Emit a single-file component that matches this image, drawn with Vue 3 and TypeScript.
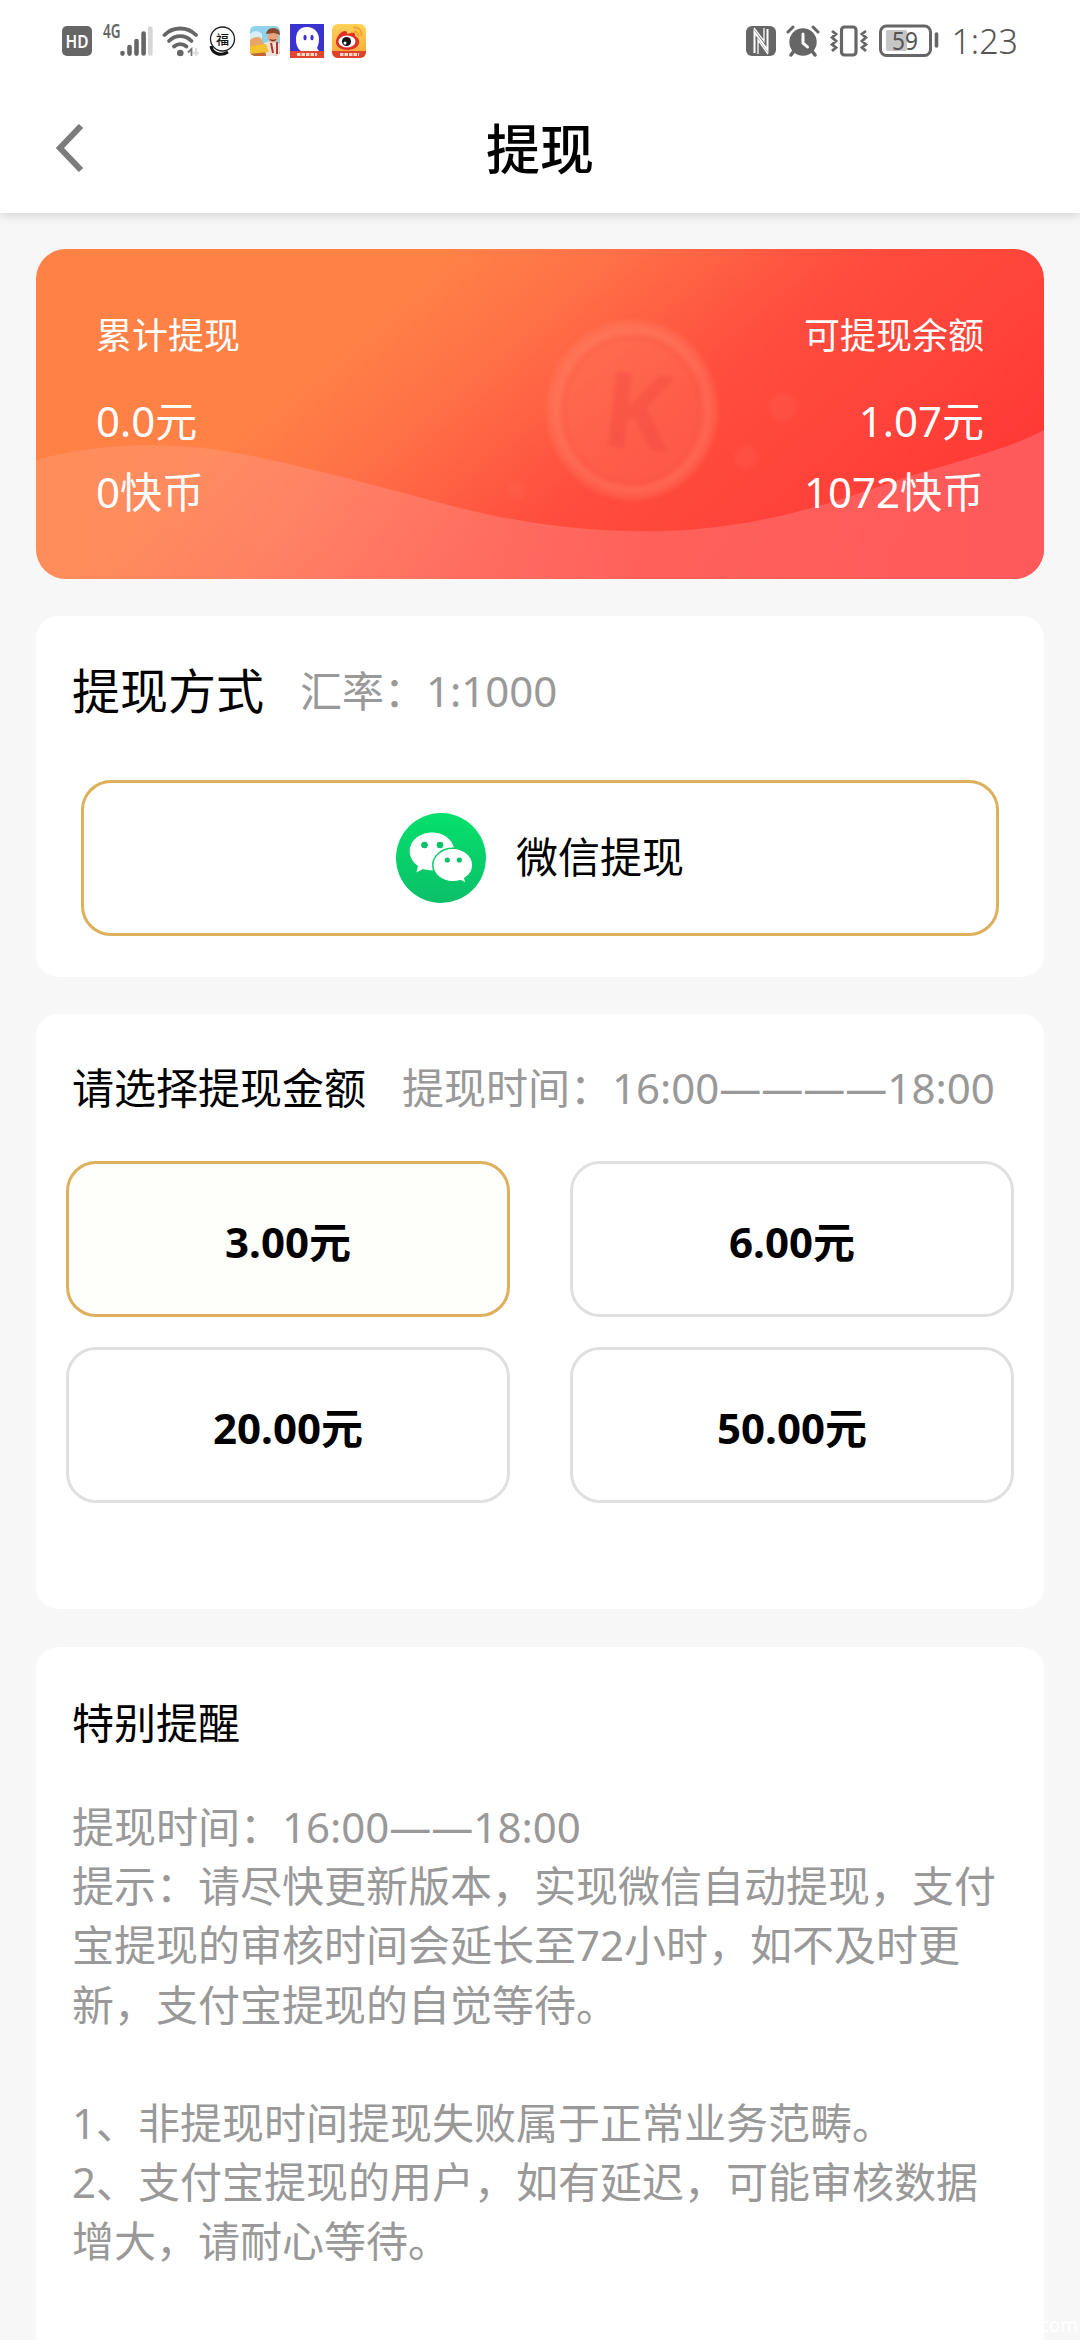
<script setup lang="ts">
import { ref } from 'vue'

interface AmountOption {
  id: number
  label: string
}

const options: AmountOption[] = [
  { id: 1, label: '3.00元' },
  { id: 2, label: '6.00元' },
  { id: 3, label: '20.00元' },
  { id: 4, label: '50.00元' },
]
const selected = ref<number>(1)

const notes: string[] = [
  '提现时间：16:00——18:00',
  '提示：请尽快更新版本，实现微信自动提现，支付宝提现的审核时间会延长至72小时，如不及时更新，支付宝提现的自觉等待。',
  '',
  '1、非提现时间提现失败属于正常业务范畴。',
  '2、支付宝提现的用户，如有延迟，可能审核数据增大，请耐心等待。',
]
</script>

<template>
  <div class="page">
    <div class="status">
      <div class="status-left">
        <svg class="ic-hd" viewBox="0 0 30 30">
          <rect width="30" height="30" rx="5" fill="#666" />
          <text x="15" y="21.5" text-anchor="middle" font-size="17.5" font-weight="600" fill="#fff" textLength="23" lengthAdjust="spacingAndGlyphs">HD</text>
        </svg>
        <svg class="ic-signal" viewBox="0 -10 50 54">
          <text x="0" y="14" font-size="19" font-weight="600" fill="#666" textLength="17.5" lengthAdjust="spacingAndGlyphs">4G</text>
          <g stroke="#666" stroke-width="4.6" stroke-linecap="round">
            <path d="M19.5 29v.6M26.5 23v6.6M33.5 17v12.6M40.6 9.500v20" />
            <path d="M47.300 4.500v25" stroke="#d6d6d6" />
          </g>
        </svg>
        <svg class="ic-wifi" viewBox="0 0 38 34">
          <g fill="none" stroke="#666" stroke-width="3.800" stroke-linecap="round">
            <path d="M2.500 11C11 2.300 25.500 2.300 34 11" />
            <path d="M7 17C13.500 10.500 23 10.500 29.500 17" />
            <path d="M12 22.500C15.500 19.200 21 19.200 24.500 22.500" />
          </g>
          <circle cx="18.300" cy="29" r="3.300" fill="#666" />
          <path d="M26 28.500l3.500-3.500v7" fill="none" stroke="#777" stroke-width="1.800" />
          <path d="M34 24v6m-2.500-2l2.500 3 2.500-3" fill="none" stroke="#ddd" stroke-width="2" />
        </svg>
        <svg class="ic-fu" viewBox="0 0 28 32">
          <path d="M3 21C4 28 12 32 20 27" fill="none" stroke="#111" stroke-width="3" />
          <circle cx="14.500" cy="14" r="12" fill="#fff" stroke="#222" stroke-width="1.300" />
          <text x="14.500" y="18.800" text-anchor="middle" font-size="13" font-weight="500" fill="#111">福</text>
        </svg>
        <svg class="ic-game" viewBox="0 0 30 30">
          <defs><clipPath id="gameClip"><rect width="30" height="30" rx="5" /></clipPath></defs>
          <g clip-path="url(#gameClip)">
            <rect width="30" height="30" fill="#8fd2ec" />
            <path d="M0 8q6-6 12 0v6H0z" fill="#d8eef2" />
            <path d="M0 14q5-5 11-2l4 8H0z" fill="#e9a46a" />
            <path d="M0 26h30v4H0z" fill="#c2642f" />
            <path d="M14 17l9-3 7 4v12H16z" fill="#ece3d8" />
            <path d="M21 17l2 10M27 16v12" stroke="#b5352c" stroke-width="2" />
            <path d="M0 20l16-2 3 8-19 2z" fill="#f3c22e" />
            <circle cx="23" cy="11" r="5.500" fill="#e6a47c" />
            <path d="M16 8q1-6 7-6 7 0 7 7l-6-2z" fill="#8a4a2a" />
            <path d="M20 13.500q3 2 6 0" stroke="#63301d" stroke-width="1.500" fill="none" />
          </g>
        </svg>
        <svg class="ic-ghost" viewBox="0 0 34 34">
          <rect width="34" height="34" fill="#3a33cf" />
          <path d="M6 16C6 7 10 3 17 3s12 5 12 12c0 4-1 7-2 9l2 3H11C8 25 6 21 6 16z" fill="#fff" />
          <ellipse cx="15" cy="13.500" rx="1.600" ry="2.800" fill="#3a33cf" />
          <ellipse cx="22" cy="13.500" rx="1.600" ry="2.800" fill="#3a33cf" />
          <rect y="27" width="34" height="7" fill="#e2452f" />
          <path d="M7 30.500h20" stroke="#ffd9c8" stroke-width="3" stroke-dasharray="3.500 1" />
        </svg>
        <svg class="ic-weibo" viewBox="0 0 34 34">
          <defs>
            <linearGradient id="weiboBg" x1="0" y1="0" x2="0" y2="1">
              <stop offset="0" stop-color="#ffd257" /><stop offset="1" stop-color="#f9a637" />
            </linearGradient>
            <clipPath id="weiboClip"><rect width="34" height="34" rx="6" /></clipPath>
          </defs>
          <g clip-path="url(#weiboClip)">
            <rect width="34" height="34" fill="url(#weiboBg)" />
            <path d="M4 17C5 11 10 7 13 7c3 0 2 3 2 3s5-2 7-1c2 1 1 3 1 3s5 2 4 7c-1 5-7 7-12 7S3 23 4 17z" fill="#dd3027" />
            <ellipse cx="15" cy="17.500" rx="8.500" ry="6" fill="#fff" />
            <circle cx="14.500" cy="17.500" r="4.600" fill="#161616" />
            <circle cx="13" cy="19" r="1.500" fill="#fff" />
            <path d="M22 3.500c5-.5 8 3 7.500 8M22.500 7.500c2.500 0 4 1.500 3.700 4" fill="none" stroke="#f0a52d" stroke-width="2" stroke-linecap="round" />
            <rect y="27" width="34" height="7" fill="#e0402c" />
            <path d="M8 30.500h19" stroke="#ffd9c8" stroke-width="3" stroke-dasharray="3.500 1" />
          </g>
        </svg>
      </div>
      <div class="status-right">
        <svg class="ic-nfc" viewBox="0 0 30 30">
          <rect width="30" height="30" rx="6" fill="#666" />
          <path d="M8.500 27V6l13 18V3" fill="none" stroke="#fff" stroke-width="2" />
          <path d="M12 28V14l10 14M18 2v13L8 2" fill="none" stroke="#fff" stroke-width="1.300" />
        </svg>
        <svg class="ic-alarm" viewBox="0 0 34 32">
          <circle cx="17" cy="17" r="13.700" fill="#666" />
          <path d="M2 7l5-5M32 7l-5-5" stroke="#666" stroke-width="3" stroke-linecap="round" />
          <path d="M8 26l-3 4M26 26l3 4" stroke="#666" stroke-width="3.500" stroke-linecap="round" />
          <path d="M17 9v9l4.500 4" fill="none" stroke="#fff" stroke-width="3" stroke-linecap="round" />
        </svg>
        <svg class="ic-vib" viewBox="0 0 38 32">
          <rect x="11.500" y="2" width="14.500" height="28" rx="3" fill="none" stroke="#666" stroke-width="3.200" />
          <path d="M2 6l4 3-4 3.500 4 3.500-4 3.500 4 3-4 3.500M36 6l-4 3 4 3.500-4 3.500 4 3.500-4 3 4 3.500" fill="none" stroke="#666" stroke-width="2.800" />
        </svg>
        <svg class="ic-bat" viewBox="0 0 60 34">
          <rect x="7" y="6" width="21" height="21" rx="2" fill="#c6c6c6" />
          <rect x="1.500" y="2" width="50" height="29.500" rx="6" fill="none" stroke="#666" stroke-width="3" />
          <path d="M57.500 10v12" stroke="#666" stroke-width="3.600" stroke-linecap="round" />
          <text x="26" y="25.500" text-anchor="middle" font-size="25" fill="#555" textLength="26" lengthAdjust="spacingAndGlyphs">59</text>
        </svg>
        <span class="clock">1:23</span>
      </div>
    </div>

    <header class="nav">
      <svg class="back" viewBox="0 0 28 48">
        <path d="M25 2L4 24l21 22" fill="none" stroke="#7c7c7c" stroke-width="6" />
      </svg>
      <h1>提现</h1>
      <span class="nav-end"></span>
    </header>

    <main class="content">
      <section class="hero">
        <svg class="hero-art" viewBox="0 0 1008 330">
          <defs>
            <linearGradient id="wave" x1="0" y1="0" x2="1" y2="0">
              <stop offset="0" stop-color="#ff9e78" stop-opacity=".4" />
              <stop offset=".25" stop-color="#ff9483" stop-opacity=".5" />
              <stop offset=".6" stop-color="#ff6a64" stop-opacity=".75" />
              <stop offset="1" stop-color="#ff5f62" stop-opacity=".85" />
            </linearGradient>
            <filter id="soft"><feGaussianBlur stdDeviation="2" /></filter>
          </defs>
          <path d="M0 211C60 194 140 190 221 208C300 225 360 242 420 258C500 278 570 284 630 282C700 280 770 264 850 235C910 214 970 202 1008 181V330H0z" fill="url(#wave)" />
          <g filter="url(#soft)">
            <ellipse cx="596" cy="161" rx="79" ry="83" fill="#ff8068" fill-opacity=".28" stroke="#ff8a70" stroke-opacity=".28" stroke-width="13" />
            <ellipse cx="596" cy="161" rx="67" ry="72" fill="none" stroke="#e8443a" stroke-opacity=".2" stroke-width="3" />
            <text x="602" y="200" text-anchor="middle" font-size="106" font-weight="700" fill="#f0483c" fill-opacity=".38" transform="rotate(6 600 160)">K</text>
            <circle cx="747" cy="158" r="14" fill="#ff7060" fill-opacity=".16" />
            <circle cx="710" cy="208" r="12" fill="#ff7060" fill-opacity=".16" />
            <circle cx="480" cy="242" r="9" fill="#ff7060" fill-opacity=".16" />
          </g>
        </svg>
        <div class="hero-col">
          <p class="hero-label">累计提现</p>
          <p class="hero-num">0.0元</p>
          <p class="hero-num">0快币</p>
        </div>
        <div class="hero-col right">
          <p class="hero-label">可提现余额</p>
          <p class="hero-num">1.07元</p>
          <p class="hero-num">1072快币</p>
        </div>
      </section>

      <section class="card method">
        <div class="card-head">
          <h2 class="big">提现方式</h2>
          <span class="hint">汇率：1:1000</span>
        </div>
        <button class="wechat" type="button">
          <svg class="wx" viewBox="0 0 90 90">
            <defs>
              <linearGradient id="wxBg" x1="0" y1="0" x2="0" y2="1">
                <stop offset="0" stop-color="#05e06c" /><stop offset="1" stop-color="#0bc069" />
              </linearGradient>
            </defs>
            <circle cx="45" cy="45" r="45" fill="url(#wxBg)" />
            <path d="M36 19.500c-12.500 0-22.300 8.300-22.300 18.800 0 6 3.200 11.200 8.300 14.700l-1.600 6.500 6.600-3.600c2.800.9 5.700 1.400 9 1.400 12.500 0 22.300-8.500 22.300-19S48.500 19.500 36 19.500z" fill="#fff" />
            <circle cx="28.500" cy="32" r="3.300" fill="#08c267" />
            <circle cx="44" cy="32" r="3.300" fill="#08c267" />
            <path d="M56.800 35.300c-11.200 0-20 7.500-20 16.700s8.800 16.800 20 16.800c2.700 0 5.400-.4 7.800-1.200l5.500 3.200-1.300-5.500c5-3 8-7.800 8-13.300 0-9.200-8.900-16.700-20-16.700z" fill="#fff" stroke="#08cc68" stroke-width="1.500" />
            <circle cx="51.300" cy="47" r="2.600" fill="#08c267" />
            <circle cx="63.300" cy="47" r="2.600" fill="#08c267" />
          </svg>
          <span class="wx-label">微信提现</span>
        </button>
      </section>

      <section class="card amounts">
        <div class="card-head">
          <h2>请选择提现金额</h2>
          <span class="hint">提现时间：16:00————18:00</span>
        </div>
        <div class="grid">
          <button
            v-for="o in options"
            :key="o.id"
            type="button"
            class="option"
            :class="{ active: o.id === selected }"
            @click="selected = o.id"
          >{{ o.label }}</button>
        </div>
      </section>

      <section class="card reminder">
        <h2>特别提醒</h2>
        <div class="notes">
          <p v-for="(n, i) in notes" :key="i">{{ n }}</p>
        </div>
      </section>
    </main>

    <span class="watermark">com</span>
  </div>
</template>

<style>
body {
  margin: 0;
  background: #f7f7f7;
}
</style>

<style scoped>
.page {
  position: relative;
  box-sizing: border-box;
  width: 1080px;
  height: 2340px;
  overflow: hidden;
  display: flex;
  flex-direction: column;
  background: #f7f7f7;
  color: #000;
  font-family: "Noto Sans", "Noto Sans CJK SC", sans-serif;
}
h1, h2, p {
  margin: 0;
  font-weight: 400;
}
button {
  font: inherit;
  color: inherit;
  padding: 0;
  box-sizing: border-box;
  background: #fff;
}
svg {
  display: block;
  flex: none;
}
.status {
  position: relative;
  z-index: 1;
  display: flex;
  justify-content: space-between;
  align-items: flex-start;
  height: 86px;
  padding: 0 62px;
  background: #fff;
}
.status-left, .status-right {
  display: flex;
  align-items: center;
  height: 82px;
}
.ic-hd { width: 30px; height: 30px; }
.ic-signal { width: 50px; height: 54px; margin-left: 11px; }
.ic-wifi { width: 38px; height: 34px; margin-left: 9px; }
.ic-fu { width: 28px; height: 32px; margin-left: 8px; }
.ic-game { width: 30px; height: 30px; margin-left: 14px; }
.ic-ghost { width: 34px; height: 34px; margin-left: 10px; }
.ic-weibo { width: 34px; height: 34px; margin-left: 8px; }
.ic-nfc { width: 30px; height: 30px; }
.ic-alarm { width: 34px; height: 32px; margin-left: 10px; }
.ic-vib { width: 38px; height: 32px; margin-left: 10px; }
.ic-bat { width: 60px; height: 34px; margin-left: 11px; }
.clock {
  margin-left: 12px;
  font-size: 34px;
  font-weight: 300;
  line-height: 40px;
  color: #555;
}
.nav {
  position: relative;
  display: flex;
  align-items: center;
  justify-content: space-between;
  height: 127px;
  padding: 0 56px;
  box-sizing: border-box;
  background: #fff;
  box-shadow: 0 2px 10px rgba(0, 0, 0, 0.16);
}
.back { width: 28px; height: 48px; margin-bottom: 3px; }
.nav-end { width: 28px; }
.nav h1 {
  font-size: 54px;
  line-height: 80px;
  font-weight: 500;
  margin-bottom: 2px;
}
.content {
  flex: 1;
  min-height: 0;
  display: flex;
  flex-direction: column;
  padding: 36px 36px 0;
}
.hero {
  position: relative;
  display: flex;
  justify-content: space-between;
  height: 330px;
  box-sizing: border-box;
  padding: 60px 60px 0;
  border-radius: 30px;
  overflow: hidden;
  color: #fff;
  background: linear-gradient(140deg, #ff8145 0%, #ff8146 30%, #ff7047 42%, #ff4d3e 59%, #ff453b 72%, #ff3a36 87%);
}
.hero-art {
  position: absolute;
  left: 0;
  top: 0;
  width: 1008px;
  height: 330px;
}
.hero-col { position: relative; }
.right { text-align: right; }
.hero-label {
  font-size: 36px;
  line-height: 54px;
  margin-bottom: 22px;
}
.hero-num {
  font-size: 42px;
  line-height: 71px;
}
.card {
  box-sizing: border-box;
  background: #fff;
  border-radius: 22px;
  margin-top: 37px;
  padding: 0 30px;
}
.card-head {
  display: flex;
  align-items: center;
  gap: 36px;
  padding-left: 6px;
}
.card h2 {
  font-size: 42px;
  line-height: 60px;
}
.card h2.big { font-size: 48px; }
.hint {
  font-size: 42px;
  line-height: 60px;
  color: #999;
  white-space: nowrap;
}
.method {
  height: 361px;
  padding-top: 45px;
}
.wechat {
  display: flex;
  align-items: center;
  justify-content: center;
  gap: 30px;
  width: 918px;
  height: 156px;
  margin: 59px 0 0 15px;
  border: 3px solid #deb05c;
  border-radius: 30px;
  font-size: 42px;
}
.wx { width: 90px; height: 90px; }
.wx-label { line-height: 60px; padding-bottom: 2px; }
.amounts {
  height: 595px;
  padding-top: 44px;
}
.grid {
  display: grid;
  grid-template-columns: 444px 444px;
  column-gap: 60px;
  row-gap: 30px;
  margin-top: 43px;
}
.option {
  height: 156px;
  border: 3px solid #e0e0e0;
  border-radius: 30px;
  font-size: 42px;
  font-weight: 700;
}
.option.active {
  border-color: #deb05c;
  background: #fefefb;
}
.reminder {
  flex: 1;
  border-radius: 22px 22px 0 0;
  margin-top: 38px;
  padding: 46px 36px 0;
}
.notes {
  margin-top: 44px;
  font-size: 42px;
  line-height: 59.200px;
  color: #999;
}
.notes p {
  min-height: 59.200px;
  word-break: break-all;
}
.watermark {
  position: absolute;
  right: 2px;
  bottom: 3px;
  font-size: 19px;
  line-height: 24px;
  color: #fff;
}
</style>
